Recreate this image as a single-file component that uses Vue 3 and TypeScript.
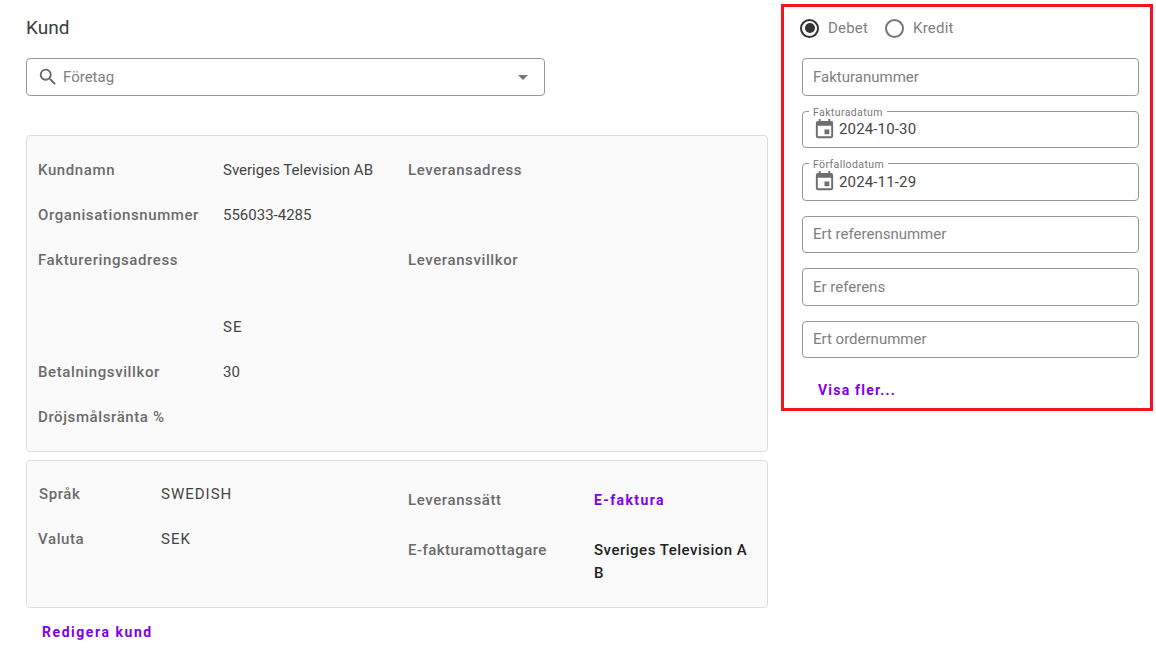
<script setup lang="ts">
const customerRows = [
  { label: 'Kundnamn', value: 'Sveriges Television AB', side: 'Leveransadress' },
  { label: 'Organisationsnummer', value: '556033-4285', side: '' },
  { label: 'Faktureringsadress', value: '', side: 'Leveransvillkor', tall: true },
  { label: '', value: 'SE', side: '', caps: true },
  { label: 'Betalningsvillkor', value: '30', side: '' },
  { label: 'Dröjsmålsränta %', value: '', side: '' },
];
const textFields = ['Ert referensnummer', 'Er referens', 'Ert ordernummer'];
const dateFields = [
  { label: 'Fakturadatum', value: '2024-10-30' },
  { label: 'Förfallodatum', value: '2024-11-29' },
];
</script>

<template>
  <div class="page">
    <section class="customer">
      <h2 class="title">Kund</h2>
      <div class="company-select">
        <svg class="search-icon" viewBox="0 0 24 24" width="24" height="24">
          <path d="M15.5 14h-.79l-.28-.27A6.47 6.47 0 0 0 16 9.5 6.5 6.5 0 1 0 9.5 16c1.61 0 3.09-.59 4.23-1.57l.27.28v.79l5 4.99L20.49 19l-4.99-5zm-6 0C7.01 14 5 11.99 5 9.5S7.01 5 9.5 5 14 7.01 14 9.5 11.99 14 9.5 14z" />
        </svg>
        <span class="placeholder">Företag</span>
        <span class="caret"></span>
      </div>

      <div class="card card-main">
        <div v-for="row in customerRows" :key="row.label + row.value" class="info-row" :class="{ tall: row.tall }">
          <span class="label">{{ row.label }}</span>
          <span class="value" :class="{ caps: row.caps }">{{ row.value }}</span>
          <span class="label">{{ row.side }}</span>
        </div>
      </div>

      <div class="card card-extra">
        <div class="extra-left">
          <div class="extra-row">
            <span class="label extra-label sprak">Språk</span>
            <span class="value caps">SWEDISH</span>
          </div>
          <div class="extra-row">
            <span class="label extra-label">Valuta</span>
            <span class="value caps">SEK</span>
          </div>
        </div>
        <div class="extra-right">
          <div class="delivery-row">
            <span class="label delivery-label">Leveranssätt</span>
            <a class="link">E-faktura</a>
          </div>
          <div class="delivery-row">
            <span class="label delivery-label receiver-label">E-fakturamottagare</span>
            <span class="receiver">Sveriges Television AB</span>
          </div>
        </div>
      </div>

      <a class="link edit-link">Redigera kund</a>
    </section>

    <aside class="invoice">
      <div class="radios">
        <span class="radio checked"></span>
        <span class="radio-text">Debet</span>
        <span class="radio"></span>
        <span class="radio-text">Kredit</span>
      </div>

      <div class="field first"><span class="placeholder">Fakturanummer</span></div>

      <fieldset v-for="d in dateFields" :key="d.label" class="field date-field">
        <legend>{{ d.label }}</legend>
        <svg class="cal-icon" viewBox="0 0 24 24" width="24" height="24">
          <path d="M17 12h-5v5h5v-5zM16 1v2H8V1H6v2H5c-1.11 0-1.99.9-1.99 2L3 19c0 1.1.89 2 2 2h14c1.1 0 2-.9 2-2V5c0-1.1-.9-2-2-2h-1V1h-2zm3 18H5V8h14v11z" />
        </svg>
        <span class="date-value">{{ d.value }}</span>
      </fieldset>

      <div v-for="f in textFields" :key="f" class="field"><span class="placeholder">{{ f }}</span></div>

      <a class="link more-link">Visa fler...</a>
    </aside>
  </div>
</template>

<style>
html,
body {
  margin: 0;
  background: #fff;
}
</style>

<style scoped>
.page {
  display: flex;
  align-items: flex-start;
  width: 1156px;
  height: 649px;
  overflow: hidden;
  box-sizing: border-box;
  padding: 4px 3px 0 26px;
  font-family: Roboto, "Liberation Sans", sans-serif;
  font-size: 15px;
  color: #333;
}
.customer {
  width: 742px;
  flex: none;
}
.title {
  margin: 13px 0 0;
  font-size: 19px;
  line-height: 22px;
  font-weight: 400;
  color: #3c3c3c;
}
.company-select {
  display: flex;
  align-items: center;
  height: 38px;
  width: 519px;
  margin-top: 19px;
  box-sizing: border-box;
  border: 1px solid #999;
  border-radius: 4px;
  padding: 0 16px 0 10px;
}
.search-icon {
  width: 22px;
  height: 22px;
  fill: #666;
  margin-right: 4px;
}
.placeholder {
  color: #808080;
  font-size: 15px;
}
.caret {
  margin-left: auto;
  width: 0;
  height: 0;
  border-left: 5px solid transparent;
  border-right: 5px solid transparent;
  border-top: 5px solid #757575;
}
.card {
  background: #fafafa;
  border: 1px solid #ddd;
  border-radius: 4px;
  box-sizing: border-box;
}
.card-main {
  height: 317px;
  margin-top: 39px;
  padding: 11px 11px 0;
}
.info-row {
  display: grid;
  grid-template-columns: 185px 185px 1fr;
  height: 45px;
  align-items: center;
}
.info-row.tall {
  height: 67px;
  align-items: start;
  padding-top: 14px;
  box-sizing: border-box;
}
.label {
  font-weight: 500;
  color: #6b6b6b;
  font-size: 15px;
  letter-spacing: 0.6px;
}
.value {
  color: #444;
  font-size: 15px;
}
.caps {
  letter-spacing: 1px;
}
.card-extra {
  display: flex;
  height: 148px;
  margin-top: 8px;
}
.extra-left {
  width: 381px;
  flex: none;
  padding: 10px 0 0 11px;
  box-sizing: border-box;
}
.extra-row {
  display: flex;
  align-items: center;
  height: 45px;
}
.extra-label {
  width: 123px;
}
.sprak {
  padding-left: 1px;
  width: 122px;
}
.extra-right {
  padding-top: 28px;
}
.delivery-row {
  display: flex;
  align-items: flex-start;
  line-height: 22px;
  height: 50px;
}
.delivery-label {
  width: 186px;
  flex: none;
}
.receiver-label {
  letter-spacing: 0.45px;
}
.receiver {
  width: 155px;
  margin-top: -0.5px;
  line-height: 23px;
  font-weight: 500;
  font-size: 15px;
  letter-spacing: 0.5px;
  color: #222;
  word-break: break-all;
}
.link {
  color: #7f00ea;
  font-weight: 700;
  font-size: 14px;
  letter-spacing: 1.4px;
}
.edit-link {
  display: block;
  margin: 16px 0 0 16px;
  line-height: 16px;
  letter-spacing: 1.55px;
}
.invoice {
  width: 372px;
  height: 407px;
  flex: none;
  margin-left: 13px;
  box-sizing: border-box;
  border: 3px solid #f5141f;
  padding: 0 11px 0 18px;
}
.radios {
  display: flex;
  align-items: center;
  height: 42px;
  margin-left: -2px;
}
.radio {
  position: relative;
  width: 19px;
  height: 19px;
  box-sizing: border-box;
  border: 2px solid #757575;
  border-radius: 50%;
}
.radio.checked {
  border-color: #333;
}
.radio.checked::after {
  content: "";
  position: absolute;
  left: 2.5px;
  top: 2.5px;
  width: 10px;
  height: 10px;
  border-radius: 50%;
  background: #333;
}
.radio-text {
  color: #808080;
  font-size: 15px;
  letter-spacing: 0.2px;
  margin: 0 17px 0 9px;
}
.field {
  display: flex;
  align-items: center;
  height: 37.5px;
  margin: 15px 0 0;
  padding: 0 10px;
  box-sizing: border-box;
  border: 1px solid #999;
  border-radius: 4px;
  min-width: 0;
}
.field.first {
  margin-top: 9px;
}
.date-field {
  position: relative;
  padding: 0 11px;
}
.date-field legend {
  position: absolute;
  top: -5px;
  left: 6px;
  padding: 0 4px;
  background: #fff;
  font-size: 10.5px;
  line-height: 12px;
  color: #777;
  letter-spacing: 0.4px;
}
.cal-icon {
  width: 23px;
  height: 23px;
  fill: #6e6e6e;
  margin: 0 3px 0 -1px;
  flex: none;
}
.date-value {
  font-size: 15px;
  letter-spacing: 0.15px;
  color: #444;
}
.more-link {
  display: block;
  margin: 23px 0 0 16px;
  line-height: 18px;
  letter-spacing: 1.2px;
}
</style>
